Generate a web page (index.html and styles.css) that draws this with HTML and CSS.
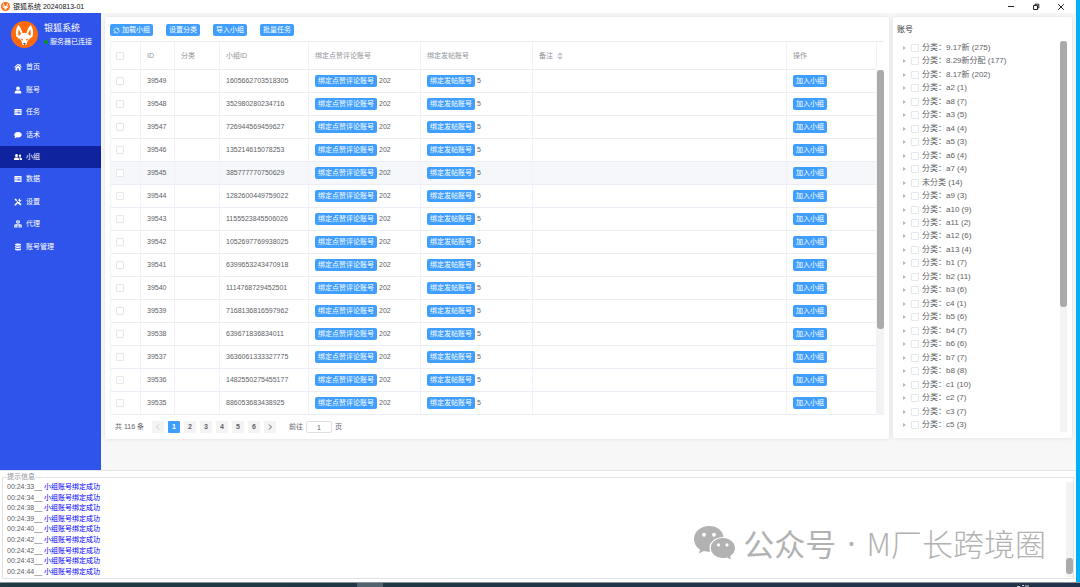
FILE: index.html
```html
<!DOCTYPE html>
<html lang="zh-CN">
<head>
<meta charset="utf-8">
<title>银狐系统 20240813-01</title>
<link rel="stylesheet" href="styles.css">
</head>
<body>
<svg class="defs" width="0" height="0" aria-hidden="true">
  <symbol id="fox" viewBox="0 0 28 28">
    <circle cx="14" cy="14" r="14" fill="#ff6a0a"/>
    <path d="M7.500 4Q11 7.500 12 12.500H16Q17 7.500 20.500 4Q24 10 22.500 16L17.500 20L15.800 25H12.200L10.500 20L5.500 16Q4 10 7.500 4Z" fill="#fff"/>
    <path d="M8 8.500L10.500 13.500L8 15.500Q7 12 8 8.500ZM20 8.500L17.500 13.500L20 15.500Q21 12 20 8.500Z" fill="#ff6a0a"/>
    <path d="M9.500 17.500L12.500 19L12 20.500ZM18.500 17.500L15.500 19L16 20.500Z" fill="#ff6a0a"/>
    <path d="M12.500 23H15.500L14 25Z" fill="#222"/>
  </symbol>
</svg>
<div class="screen">
  <div class="window">
    <header class="titlebar">
      <svg class="titlebar-logo"><use href="#fox"/></svg>
      <span class="titlebar-text">银狐系统 20240813-01</span>
      <div class="window-controls">
        <button type="button" aria-label="最小化"><svg viewBox="0 0 8 8"><path d="M1 3.500H7"/></svg></button>
        <button type="button" aria-label="还原"><svg viewBox="0 0 8 8"><path d="M1.500 2.500H5.500V6.500H1.500ZM3 2.500V1.200H6.800V5H5.500"/></svg></button>
        <button type="button" aria-label="关闭"><svg viewBox="0 0 8 8"><path d="M1.200 1.200L6.800 6.800M6.800 1.200L1.200 6.800"/></svg></button>
      </div>
    </header>

    <div class="workspace">
      <aside class="sidebar">
        <div class="brand">
          <svg class="brand-logo"><use href="#fox"/></svg>
          <div class="brand-info">
            <div class="brand-name">银狐系统</div>
            <div class="brand-status"><i class="status-dot"></i>服务器已连接</div>
          </div>
        </div>
        <nav class="nav">
          <a href="#home"><svg viewBox="0 0 16 16"><path d="M8 1.500L0.500 8L1.700 9.300L8 4L14.300 9.300L15.500 8L13 5.800V2H11V4.100ZM8 5.300L2.800 9.700V15H6.500V10.500H9.500V15H13.200V9.700Z"/></svg>首页</a>
          <a href="#account"><svg viewBox="0 0 16 16"><circle cx="8" cy="4.500" r="3.700"/><path d="M1.500 15V12Q1.500 9 5 9H11Q14.500 9 14.500 12V15Z"/></svg>账号</a>
          <a href="#task"><svg viewBox="0 0 16 16"><path fill-rule="evenodd" d="M1 2H15V14H1ZM3 5V6.500H5V5ZM6.500 5V6.500H13V5ZM3 8V9.500H5V8ZM6.500 8V9.500H13V8ZM3 11V12H5V11ZM6.500 11V12H13V11Z"/></svg>任务</a>
          <a href="#script"><svg viewBox="0 0 16 16"><path d="M8 2C12.500 2 15.500 4.500 15.500 7.500S12.500 13 8 13Q6.500 13 5 12.500Q3 14.500 0.500 14.500Q2 13 2.200 11Q0.500 9.500 0.500 7.500C0.500 4.500 3.500 2 8 2Z"/></svg>话术</a>
          <a href="#group" class="active" aria-current="page"><svg viewBox="0 0 16 16"><circle cx="5" cy="5" r="3"/><circle cx="12" cy="5.500" r="2.300"/><path d="M0 14V12Q0 9 3 9H7Q10 9 10 12V14ZM11.300 14V12Q11.300 10 10 9H13Q16 9 16 12V14Z"/></svg>小组</a>
          <a href="#data"><svg viewBox="0 0 16 16"><path fill-rule="evenodd" d="M1 2H15V14H1ZM3 5V6.500H5V5ZM6.500 5V6.500H13V5ZM3 8V9.500H5V8ZM6.500 8V9.500H13V8ZM3 11V12H5V11ZM6.500 11V12H13V11Z"/></svg>数据</a>
          <a href="#settings"><svg viewBox="0 0 16 16"><path d="M1 2.500L2.500 1L6 3.500V5.500L9 8.200L10.800 8L15 12.500L12.500 15L8 10.800V9L5.200 6.200H3.500ZM1.200 12.800L7 7.200L9 9.200L3.500 14.800Q1.500 15.500 1 14.500ZM8.800 5.500Q8.500 1 13 1.200L11.500 3.200L13 4.700L15 3.300Q15.300 7.500 11 7.500Z"/></svg>设置</a>
          <a href="#proxy"><svg viewBox="0 0 16 16"><path fill-rule="evenodd" d="M4.500 1H11.500V6.500H8.800V8H13V9.500H15.500V15H9V9.500H11.500V9H4.500V9.500H7V15H0.500V9.500H3V8H7.200V6.500H4.500ZM6.500 3V4.800H9.500V3ZM2.300 11.300V13.200H5.200V11.300ZM10.800 11.300V13.200H13.700V11.300Z"/></svg>代理</a>
          <a href="#manage"><svg viewBox="0 0 16 16"><path d="M2 3Q2 1 8 1T14 3V4Q14 5.500 8 5.500T2 4ZM2 5.800Q4 7 8 7T14 5.800V8.200Q14 10 8 10T2 8.200ZM2 10.300Q4 11.500 8 11.500T14 10.300V13Q14 15 8 15T2 13Z"/></svg>账号管理</a>
        </nav>
      </aside>

      <main class="content">
        <section class="card groups">
          <div class="toolbar">
            <button type="button" class="btn"><svg viewBox="0 0 8 8"><path stroke-width="0.800" d="M1.200 4.800A2.800 2.800 0 0 1 6 2.200M6.800 3.200A2.800 2.800 0 0 1 2 5.900M6.300 1V2.600H4.700M1.700 7V5.500H3.300"/></svg>加载小组</button>
            <button type="button" class="btn">设置分类</button>
            <button type="button" class="btn">导入小组</button>
            <button type="button" class="btn">批量任务</button>
          </div>
          <div class="table-wrap">
            <table class="table">
              <colgroup><col class="c-check"><col class="c-id"><col class="c-cat"><col class="c-gid"><col class="c-bind"><col class="c-bind"><col><col class="c-op"></colgroup>
              <thead>
                <tr><th><input type="checkbox" aria-label="全选"></th><th>ID</th><th>分类</th><th>小组ID</th><th>绑定点赞评论账号</th><th>绑定发帖账号</th><th>备注<svg class="sort" viewBox="0 0 6 8"><path d="M0 3.300L3 0.300L6 3.300ZM0 4.700L3 7.700L6 4.700Z"/></svg></th><th>操作</th></tr>
              </thead>
              <tbody>
                <tr><td><input type="checkbox" aria-label="39549"></td><td>39549</td><td></td><td>1605662703518305</td><td><button type="button" class="btn">绑定点赞评论账号</button>202</td><td><button type="button" class="btn">绑定发帖账号</button>5</td><td></td><td><button type="button" class="btn">加入小组</button></td></tr>
                <tr><td><input type="checkbox" aria-label="39548"></td><td>39548</td><td></td><td>352980280234716</td><td><button type="button" class="btn">绑定点赞评论账号</button>202</td><td><button type="button" class="btn">绑定发帖账号</button>5</td><td></td><td><button type="button" class="btn">加入小组</button></td></tr>
                <tr><td><input type="checkbox" aria-label="39547"></td><td>39547</td><td></td><td>726944569459627</td><td><button type="button" class="btn">绑定点赞评论账号</button>202</td><td><button type="button" class="btn">绑定发帖账号</button>5</td><td></td><td><button type="button" class="btn">加入小组</button></td></tr>
                <tr><td><input type="checkbox" aria-label="39546"></td><td>39546</td><td></td><td>135214615078253</td><td><button type="button" class="btn">绑定点赞评论账号</button>202</td><td><button type="button" class="btn">绑定发帖账号</button>5</td><td></td><td><button type="button" class="btn">加入小组</button></td></tr>
                <tr class="hovered"><td><input type="checkbox" aria-label="39545"></td><td>39545</td><td></td><td>385777770750629</td><td><button type="button" class="btn">绑定点赞评论账号</button>202</td><td><button type="button" class="btn">绑定发帖账号</button>5</td><td></td><td><button type="button" class="btn">加入小组</button></td></tr>
                <tr><td><input type="checkbox" aria-label="39544"></td><td>39544</td><td></td><td>1282600449759022</td><td><button type="button" class="btn">绑定点赞评论账号</button>202</td><td><button type="button" class="btn">绑定发帖账号</button>5</td><td></td><td><button type="button" class="btn">加入小组</button></td></tr>
                <tr><td><input type="checkbox" aria-label="39543"></td><td>39543</td><td></td><td>1155523845506026</td><td><button type="button" class="btn">绑定点赞评论账号</button>202</td><td><button type="button" class="btn">绑定发帖账号</button>5</td><td></td><td><button type="button" class="btn">加入小组</button></td></tr>
                <tr><td><input type="checkbox" aria-label="39542"></td><td>39542</td><td></td><td>1052697769938025</td><td><button type="button" class="btn">绑定点赞评论账号</button>202</td><td><button type="button" class="btn">绑定发帖账号</button>5</td><td></td><td><button type="button" class="btn">加入小组</button></td></tr>
                <tr><td><input type="checkbox" aria-label="39541"></td><td>39541</td><td></td><td>6399653243470918</td><td><button type="button" class="btn">绑定点赞评论账号</button>202</td><td><button type="button" class="btn">绑定发帖账号</button>5</td><td></td><td><button type="button" class="btn">加入小组</button></td></tr>
                <tr><td><input type="checkbox" aria-label="39540"></td><td>39540</td><td></td><td>1114768729452501</td><td><button type="button" class="btn">绑定点赞评论账号</button>202</td><td><button type="button" class="btn">绑定发帖账号</button>5</td><td></td><td><button type="button" class="btn">加入小组</button></td></tr>
                <tr><td><input type="checkbox" aria-label="39539"></td><td>39539</td><td></td><td>7168136816597962</td><td><button type="button" class="btn">绑定点赞评论账号</button>202</td><td><button type="button" class="btn">绑定发帖账号</button>5</td><td></td><td><button type="button" class="btn">加入小组</button></td></tr>
                <tr><td><input type="checkbox" aria-label="39538"></td><td>39538</td><td></td><td>639671836834011</td><td><button type="button" class="btn">绑定点赞评论账号</button>202</td><td><button type="button" class="btn">绑定发帖账号</button>5</td><td></td><td><button type="button" class="btn">加入小组</button></td></tr>
                <tr><td><input type="checkbox" aria-label="39537"></td><td>39537</td><td></td><td>3636061333327775</td><td><button type="button" class="btn">绑定点赞评论账号</button>202</td><td><button type="button" class="btn">绑定发帖账号</button>5</td><td></td><td><button type="button" class="btn">加入小组</button></td></tr>
                <tr><td><input type="checkbox" aria-label="39536"></td><td>39536</td><td></td><td>1482550275455177</td><td><button type="button" class="btn">绑定点赞评论账号</button>202</td><td><button type="button" class="btn">绑定发帖账号</button>5</td><td></td><td><button type="button" class="btn">加入小组</button></td></tr>
                <tr><td><input type="checkbox" aria-label="39535"></td><td>39535</td><td></td><td>886053683438925</td><td><button type="button" class="btn">绑定点赞评论账号</button>202</td><td><button type="button" class="btn">绑定发帖账号</button>5</td><td></td><td><button type="button" class="btn">加入小组</button></td></tr>
              </tbody>
            </table>
            <div class="gutter"><div class="track"><div class="thumb"></div></div></div>
          </div>
          <div class="pager">
            <span class="pager-total">共 116 条</span>
            <button type="button" disabled aria-label="上一页"><svg viewBox="0 0 8 8"><path d="M5 1.500L2.500 4L5 6.500"/></svg></button>
            <button type="button" class="current">1</button>
            <button type="button">2</button>
            <button type="button">3</button>
            <button type="button">4</button>
            <button type="button">5</button>
            <button type="button">6</button>
            <button type="button" aria-label="下一页"><svg viewBox="0 0 8 8"><path d="M3 1.500L5.500 4L3 6.500"/></svg></button>
            <label class="pager-jump">前往<input type="text" value="1">页</label>
          </div>
        </section>

        <section class="card accounts">
          <h2>账号</h2>
          <div class="tree-wrap">
            <ul class="tree">
              <li><label><input type="checkbox">分类：9.17新 (275)</label></li>
              <li><label><input type="checkbox">分类：8.29新分配 (177)</label></li>
              <li><label><input type="checkbox">分类：8.17新 (202)</label></li>
              <li><label><input type="checkbox">分类：a2 (1)</label></li>
              <li><label><input type="checkbox">分类：a8 (7)</label></li>
              <li><label><input type="checkbox">分类：a3 (5)</label></li>
              <li><label><input type="checkbox">分类：a4 (4)</label></li>
              <li><label><input type="checkbox">分类：a5 (3)</label></li>
              <li><label><input type="checkbox">分类：a6 (4)</label></li>
              <li><label><input type="checkbox">分类：a7 (4)</label></li>
              <li><label><input type="checkbox">未分类 (14)</label></li>
              <li><label><input type="checkbox">分类：a9 (3)</label></li>
              <li><label><input type="checkbox">分类：a10 (9)</label></li>
              <li><label><input type="checkbox">分类：a11 (2)</label></li>
              <li><label><input type="checkbox">分类：a12 (6)</label></li>
              <li><label><input type="checkbox">分类：a13 (4)</label></li>
              <li><label><input type="checkbox">分类：b1 (7)</label></li>
              <li><label><input type="checkbox">分类：b2 (11)</label></li>
              <li><label><input type="checkbox">分类：b3 (6)</label></li>
              <li><label><input type="checkbox">分类：c4 (1)</label></li>
              <li><label><input type="checkbox">分类：b5 (6)</label></li>
              <li><label><input type="checkbox">分类：b4 (7)</label></li>
              <li><label><input type="checkbox">分类：b6 (6)</label></li>
              <li><label><input type="checkbox">分类：b7 (7)</label></li>
              <li><label><input type="checkbox">分类：b8 (8)</label></li>
              <li><label><input type="checkbox">分类：c1 (10)</label></li>
              <li><label><input type="checkbox">分类：c2 (7)</label></li>
              <li><label><input type="checkbox">分类：c3 (7)</label></li>
              <li><label><input type="checkbox">分类：c5 (3)</label></li>
            </ul>
            <div class="track"><div class="thumb tree-thumb"></div></div>
          </div>
        </section>
      </main>
    </div>

    <footer class="console">
      <fieldset>
        <legend>提示信息</legend>
        <ol class="log">
          <li><time>00:24:33__</time><span>小组账号绑定成功</span></li>
          <li><time>00:24:34__</time><span>小组账号绑定成功</span></li>
          <li><time>00:24:38__</time><span>小组账号绑定成功</span></li>
          <li><time>00:24:39__</time><span>小组账号绑定成功</span></li>
          <li><time>00:24:40__</time><span>小组账号绑定成功</span></li>
          <li><time>00:24:42__</time><span>小组账号绑定成功</span></li>
          <li><time>00:24:42__</time><span>小组账号绑定成功</span></li>
          <li><time>00:24:43__</time><span>小组账号绑定成功</span></li>
          <li><time>00:24:44__</time><span>小组账号绑定成功</span></li>
        </ol>
        <div class="track log-track"><div class="thumb log-thumb"></div></div>
      </fieldset>
    </footer>
  </div>

  <div class="taskbar"><i class="task-active"></i><svg class="task-clock" viewBox="0 0 16 2"><path d="M1 1.500H4M6 0.500H8M9 1H13" stroke="#c8ced6"/></svg></div>

  <div class="watermark">
    <svg viewBox="0 0 41 34"><path fill-rule="evenodd" d="M15 0C23 0 29 4.500 29.500 11C21 11 15.500 16 15.500 22Q15.500 24 16.300 25.700Q13 26 9.800 25L5 27.500L6 23.500C2.500 21.500 0 17.500 0 13C0 5.500 7 0 15 0ZM10 6.800A2 2 0 1 0 10 10.800A2 2 0 1 0 10 6.800ZM20 6.800A2 2 0 1 0 20 10.800A2 2 0 1 0 20 6.800Z"/><path fill-rule="evenodd" d="M29 12C35.500 12 41 16.500 41 22C41 25.500 39 28.200 36.200 30L37 33.500L33.200 31.500Q31 32 29 32C22 32 16.800 27.500 16.800 22C16.800 16.500 22 12 29 12ZM24.500 17.300A1.600 1.600 0 1 0 24.500 20.500A1.600 1.600 0 1 0 24.500 17.300ZM33 17.300A1.600 1.600 0 1 0 33 20.500A1.600 1.600 0 1 0 33 17.300Z"/></svg>
    <div class="watermark-text"><span>公众号</span><span class="middot">·</span><span class="thin">M厂长跨境圈</span></div>
  </div>
</div>
</body>
</html>
```
FILE: styles.css
```css
* { box-sizing: border-box; }

body {
  margin: 0;
  font-family: "Liberation Sans", "Noto Sans CJK SC", sans-serif;
  font-size: 7px;
  line-height: 10px;
  color: #606266;
}

button, input { font: inherit; margin: 0; }
ul, ol { list-style: none; margin: 0; padding: 0; }
.defs { position: absolute; }

.screen {
  position: relative;
  display: flex;
  flex-direction: column;
  min-height: 100vh;
  background: #00b0f8;
}

.window {
  flex: 1;
  display: flex;
  flex-direction: column;
  margin-right: 4px;
  background: #fff;
}

/* Title bar */
.titlebar {
  display: flex;
  align-items: center;
  height: 13px;
  padding: 0 11px 0 1px;
  color: #111;
}
.titlebar-logo { width: 9px; height: 9px; margin-right: 3px; }
.window-controls { display: flex; gap: 17px; margin-left: auto; }
.window-controls button {
  width: 8px;
  height: 8px;
  padding: 0;
  border: 0;
  background: none;
}
.window-controls svg { display: block; fill: none; stroke: #222; stroke-width: 1; }

/* Sidebar */
.workspace { flex: 1; display: flex; border-bottom: 1px solid #e4e4e4; }

.sidebar { width: 101px; background: #2f54eb; color: #fff; }
.brand { display: flex; gap: 6px; height: 43px; padding: 8px 0 0 11px; }
.brand-logo { width: 27px; height: 27px; }
.brand-name { font-size: 9px; line-height: 14px; }
.brand-status { display: flex; align-items: center; gap: 2px; line-height: 13px; }
.status-dot { width: 4px; height: 4px; border-radius: 50%; background: #0c9618; }

.nav { display: grid; grid-auto-rows: 1fr; height: 202px; }
.nav a {
  display: flex;
  align-items: center;
  gap: 4px;
  padding-left: 14px;
  color: #fff;
  text-decoration: none;
}
.nav svg { width: 8px; height: 8px; fill: #fff; }
.nav .active { background: #10239e; }

/* Content */
.content {
  flex: 1;
  display: flex;
  align-items: flex-start;
  gap: 4px;
  padding: 4px;
  background: #f7f7f7;
}
.card {
  background: #fff;
  border-radius: 2px;
  box-shadow: 0 0 4px rgba(0, 0, 0, 0.1);
}
.groups { flex: 1; padding: 7px 5px 6px; }

.btn {
  display: inline-flex;
  align-items: center;
  gap: 2px;
  height: 12px;
  padding: 0 3px;
  border: 0;
  border-radius: 2px;
  background: #409eff;
  color: #fff;
  white-space: nowrap;
}
.btn svg { width: 7px; height: 7px; fill: none; stroke: #fff; }
.toolbar { display: flex; gap: 13px; margin-bottom: 5px; }

input[type="checkbox"] {
  appearance: none;
  display: block;
  width: 8px;
  height: 8px;
  border: 1px solid #e4e7ed;
  border-radius: 1px;
  background: #fff;
}

.table-wrap { display: flex; border-top: 1px solid #ebeef5; }
.table {
  flex: 1;
  width: 100%;
  table-layout: fixed;
  border-collapse: separate;
  border-spacing: 0;
  border-left: 1px solid #f0f2f7;
}
.table th, .table td {
  height: 23px;
  padding: 0 6px;
  border-right: 1px solid #f0f2f7;
  border-bottom: 1px solid #ebeef5;
  text-align: left;
  vertical-align: middle;
  white-space: nowrap;
}
.table th { height: 28px; font-weight: 400; color: #909399; }
.table th:first-child, .table td:first-child { padding-left: 5px; }
.table td .btn { margin-right: 2px; vertical-align: middle; }
.hovered { background: #f5f7fa; }
.c-check { width: 30px; }
.c-id { width: 34px; }
.c-cat { width: 45px; }
.c-gid { width: 89px; }
.c-bind { width: 112px; }
.c-op { width: 90px; }
.sort { width: 6px; height: 8px; margin-left: 4px; vertical-align: middle; fill: #c0c4cc; }

.gutter {
  display: flex;
  flex-direction: column;
  width: 7px;
  padding-top: 28px;
}
.track { width: 7px; background: #f3f3f5; }
.gutter .track { flex: 1; }
.thumb { height: 75%; border-radius: 3px; background: #aaa; }

/* Pagination */
.pager { display: flex; align-items: center; gap: 4px; padding: 6px 5px 0; }
.pager-total { margin-right: 4px; }
.pager button {
  display: flex;
  align-items: center;
  justify-content: center;
  width: 12px;
  height: 12px;
  padding: 0;
  border: 0;
  border-radius: 1px;
  background: #f4f4f5;
  color: #606266;
  font-weight: 700;
}
.pager button svg { width: 8px; height: 8px; fill: none; stroke: #606266; }
.pager button:disabled svg { stroke: #c0c4cc; }
.pager .current { background: #409eff; color: #fff; }
.pager-jump { display: flex; align-items: center; gap: 3px; margin-left: 9px; }
.pager-jump input {
  width: 26px;
  height: 12px;
  padding: 0;
  border: 1px solid #dcdfe6;
  border-radius: 2px;
  text-align: center;
  color: #606266;
}

/* Account tree */
.accounts {
  display: flex;
  flex-direction: column;
  width: 179px;
  padding: 8px 5px 6px 4px;
}
.accounts h2 {
  margin: 0 0 6px;
  font-size: 8px;
  line-height: 10px;
  font-weight: 400;
  color: #303133;
}
.tree-wrap { display: flex; justify-content: space-between; height: 391px; }
.tree {
  display: grid;
  grid-auto-rows: 1fr;
  padding-left: 6px;
  font-size: 8px;
}
.tree li { display: flex; align-items: center; gap: 5px; }
.tree li::before {
  content: "";
  border: 2px solid transparent;
  border-left: 3px solid #b4b8bf;
  border-right: 0;
}
.tree label { display: flex; align-items: center; gap: 3px; }
.tree-thumb { height: 68%; }

/* Log console */
.console { padding: 1px 2px 3px; }
.console fieldset {
  display: flex;
  justify-content: space-between;
  min-width: 0;
  margin: 0;
  padding: 0 0 1px 4px;
  border: 1px solid #e2e2e2;
}
.console legend { padding: 0; line-height: 10px; color: #909399; }
.log { display: grid; grid-auto-rows: 1fr; height: 95px; }
.log li { display: flex; align-items: center; gap: 2px; }
.log span { color: #00f; }
.log-track { display: flex; align-items: flex-end; padding-bottom: 3px; }
.log-thumb { width: 7px; height: 16px; }

/* Taskbar */
.taskbar {
  display: flex;
  justify-content: space-between;
  height: 5px;
  padding: 0 48px 0 357px;
  border-top: 1px solid #8b959c;
  background: linear-gradient(90deg, #1f3a42, #22324c);
}
.task-active { width: 26px; background: #51636e; }
.task-clock { align-self: flex-end; width: 16px; height: 2px; }

.watermark {
  position: absolute;
  right: 34px;
  bottom: 22px;
  display: flex;
  align-items: center;
  gap: 8px;
  font-family: "Noto Sans CJK SC", sans-serif;
  font-size: 31px;
  line-height: 44px;
  color: #b2b2b2;
  white-space: nowrap;
}
.watermark svg { width: 41px; height: 34px; fill: #b2b2b2; }
.watermark-text { display: flex; gap: 11px; }
.middot { font-family: "Noto Sans", sans-serif; }
.thin { font-weight: 300; }
```
